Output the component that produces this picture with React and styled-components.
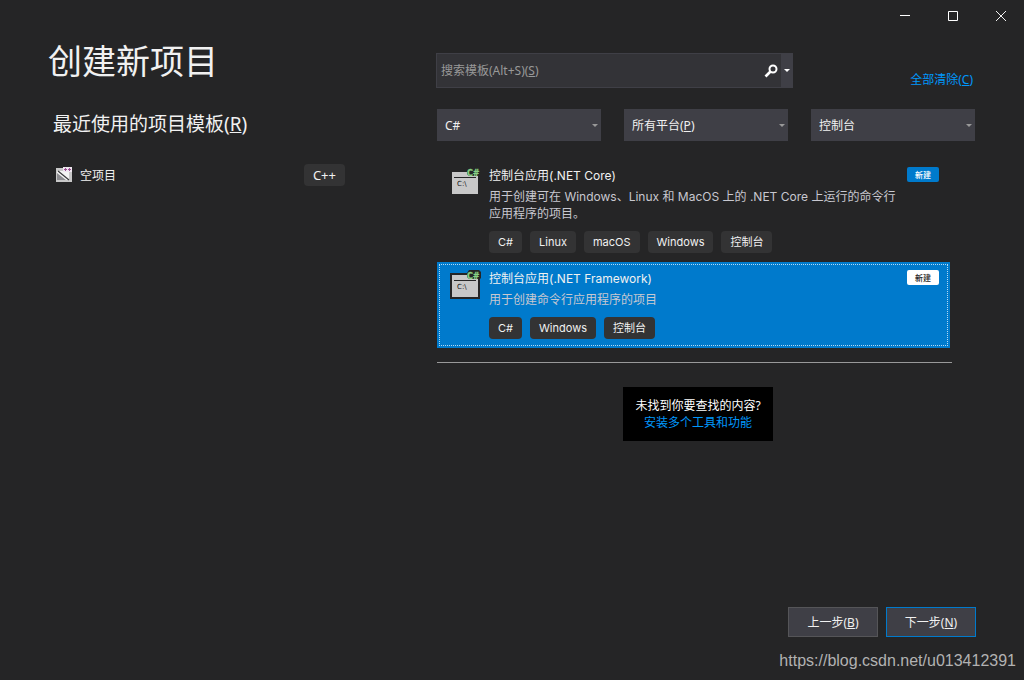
import React, { useState } from "react";
import styled, { createGlobalStyle, css } from "styled-components";

const GlobalStyle = createGlobalStyle`
  *, *::before, *::after { box-sizing: border-box; }
  body {
    margin: 0;
    background: #252526;
    color: #f1f1f1;
    font: 12px/17px "Noto Sans", "Noto Sans CJK SC", sans-serif;
  }
  button, input, select { font: inherit; color: inherit; }
  h1, h2, h3, p, ul { margin: 0; padding: 0; font-weight: 400; }
  ul { list-style: none; }
`;

const Window = styled.div`
  min-height: 100vh;
  display: flex;
  flex-direction: column;
  background: #252526;
`;

const TitleBar = styled.header`
  display: flex;
  justify-content: flex-end;
  gap: 2px;
`;

const CaptionButton = styled.button`
  width: 46px;
  height: 32px;
  padding: 0;
  border: 0;
  background: transparent;
  display: grid;
  place-items: center;
`;

const Body = styled.main`
  display: grid;
  grid-template-columns: 297px minmax(0, 1fr);
  column-gap: 92px;
  padding: 8px 49px 0 48px;
`;

const Title = styled.h1`
  font-size: 34px;
  line-height: 42px;
`;

const Subtitle = styled.h2`
  margin: 28px 0 0 5px;
  font-size: 19px;
  line-height: 28px;
`;

const RecentItem = styled.li`
  display: flex;
  align-items: center;
  gap: 8px;
  margin-top: 26px;
  padding-left: 8px;
`;

const RecentName = styled.span`
  flex: 1;
`;

const SearchRow = styled.div`
  display: flex;
  align-items: flex-end;
  justify-content: space-between;
  margin: 13px 2px 0 -1px;
`;

const SearchBox = styled.div`
  position: relative;
  display: flex;
  width: 357px;
  height: 35px;
  border: 1px solid #3f3f46;
  background: #333337;
`;

const SearchInput = styled.input`
  flex: 1;
  min-width: 0;
  padding: 0 4px;
  border: 0;
  outline: 0;
  background: transparent;
`;

const hint = css`
  position: absolute;
  top: 0;
  bottom: 0;
  display: flex;
  align-items: center;
  pointer-events: none;
  white-space: nowrap;
`;

const SearchLabel = styled.label`
  ${hint}
  left: 4px;
  color: #999999;
`;

const SearchButton = styled.button`
  width: ${(p) => (p.$narrow ? "11px" : "20px")};
  padding: 0;
  border: 0;
  background: ${(p) => (p.$narrow ? "#3f3f46" : "transparent")};
  display: grid;
  place-items: center;
`;

const Link = styled.a`
  color: #0097fb;
  text-decoration: none;
`;

const Filters = styled.div`
  display: grid;
  grid-template-columns: repeat(3, minmax(0, 1fr));
  gap: 23px;
  margin-top: 21px;
`;

const FilterField = styled.div`
  position: relative;
  height: 32px;
  background: #3f3f46;

  svg {
    position: absolute;
    right: 3px;
    top: 15px;
    pointer-events: none;
  }
`;

const FilterSelect = styled.select`
  width: 100%;
  height: 100%;
  padding: 0 16px 0 8px;
  border: 0;
  appearance: none;
  background: transparent;

  option { background: #1b1b1c; }
`;

const FilterLabel = styled.label`
  ${hint}
  left: 8px;
`;

const Results = styled.section`
  display: flex;
  flex-direction: column;
  margin: 18px 16px 0 0;
`;

const Template = styled.li`
  display: flex;
  align-items: flex-start;
  margin-right: 9px;
  padding: 8px 11px 9px 10px;
  background: ${(p) => (p.$selected ? "#007acc" : "transparent")};
  outline: ${(p) => (p.$selected ? "1px dotted #b4daf4" : "none")};
  outline-offset: -3px;
`;

const TemplateText = styled.div`
  flex: 1;
  min-width: 0;
  margin-left: 6px;
  font-family: Inter, "Noto Sans CJK SC", sans-serif;
`;

const TemplateName = styled.h3`
  font-size: 12px;
  line-height: 17px;
`;

const Description = styled.p`
  margin-top: 4px;
  color: #c8c8d0;
`;

const Tags = styled.ul`
  display: flex;
  gap: 8px;
  margin-top: 9px;
`;

const Tag = styled.span`
  display: block;
  height: 22px;
  padding: 0 9px;
  border-radius: 4px;
  background: #333334;
  color: #f1f1f1;
  font-size: ${(p) => (p.$large ? "13px" : "11px")};
  line-height: 22px;
  white-space: nowrap;
`;

const Badge = styled.span`
  width: 32px;
  height: 15px;
  border-radius: 2px;
  background: ${(p) => (p.$inverse ? "#ffffff" : "#007acc")};
  color: ${(p) => (p.$inverse ? "#1e1e1e" : "#ffffff")};
  font-size: 8px;
  font-weight: 500;
  line-height: 15px;
  text-align: center;
`;

const Divider = styled.hr`
  width: calc(100% - 7px);
  height: 1px;
  margin: 14px 0 0;
  border: 0;
  background: #999999;
`;

const NotFound = styled.div`
  align-self: center;
  margin-top: 24px;
  padding: 10px 12px;
  background: #000000;
  color: #ffffff;
  text-align: center;
`;

const Footer = styled.footer`
  margin-top: auto;
  padding: 0 8px 7px;
`;

const Actions = styled.div`
  display: flex;
  justify-content: flex-end;
  gap: 8px;
  padding-right: 40px;
`;

const ActionButton = styled.button`
  width: 90px;
  height: 30px;
  padding: 0;
  border: 1px solid ${(p) => (p.$primary ? "#007acc" : "#555558")};
  background: #3f3f46;
`;

const Watermark = styled.p`
  margin-top: 12px;
  color: #b2b2b2;
  font: 16px/24px "Liberation Sans", Arial, sans-serif;
  text-align: right;
`;

const Arrow = ({ color = "#999999" }) => (
  <svg width="6" height="3" viewBox="0 0 6 3" aria-hidden="true">
    <path d="M0 0h6L3 3z" fill={color} />
  </svg>
);

const ConsoleIcon = ({ outlined }) => (
  <svg width="36" height="32" viewBox="0 0 36 32" aria-hidden="true">
    {outlined && (
      <path d="M3 3h17l2-3h10l2 2v6l-1 1v20H3z" fill="#252526" />
    )}
    <path d="M5 5h26v22H5z" fill="#c8c8c8" />
    <path d="M7 10.500h22" stroke="#252526" />
    <path d="M20 5l2-4h11v8H22l-2-2z" fill="#252526" />
    <text x="20" y="9" fill="#89d185" stroke="#89d185" strokeWidth=".3" fontFamily="DejaVu Sans, sans-serif" fontWeight="700" fontSize="8">C#</text>
    <text x="10" y="19" fill="#111111" fontFamily="DejaVu Sans, sans-serif" fontSize="7">C:\</text>
  </svg>
);

const EmptyProjectIcon = () => (
  <svg width="16" height="16" viewBox="0 0 16 16" aria-hidden="true">
    <path d="M0 1h16v14H0z" fill="#c8c8c8" />
    <path d="M1 4h12v9H1z" fill="#f4f4f4" />
    <path d="M1 6l9 7H1z" fill="#8c8c90" />
    <path d="M2 4l11 9" stroke="#38383a" strokeWidth="1.200" />
    <path d="M7 0h9v5H7z" fill="#efe6ef" />
    <path d="M8 2.500h3M9.500 1v3M12 2.500h3M13.500 1v3" stroke="#9b4f96" />
  </svg>
);

const TEMPLATES = [
  {
    name: "控制台应用(.NET Core)",
    description: "用于创建可在 Windows、Linux 和 MacOS 上的 .NET Core 上运行的命令行应用程序的项目。",
    tags: ["C#", "Linux", "macOS", "Windows", "控制台"],
  },
  {
    name: "控制台应用(.NET Framework)",
    description: "用于创建命令行应用程序的项目",
    tags: ["C#", "Windows", "控制台"],
  },
];

export default function App() {
  const [query, setQuery] = useState("");
  const [platform, setPlatform] = useState("");
  const [selected, setSelected] = useState(1);

  return (
    <>
      <GlobalStyle />
      <Window>
        <TitleBar>
          <CaptionButton aria-label="最小化">
            <svg width="10" height="10" viewBox="0 0 10 10"><path d="M0 4h10v1H0z" fill="#fff" /></svg>
          </CaptionButton>
          <CaptionButton aria-label="最大化">
            <svg width="10" height="10" viewBox="0 0 10 10"><path d="M.5.5h9v9h-9z" fill="none" stroke="#fff" /></svg>
          </CaptionButton>
          <CaptionButton aria-label="关闭">
            <svg width="10" height="10" viewBox="0 0 10 10"><path d="M0 0l10 10M10 0L0 10" stroke="#f1f1f1" /></svg>
          </CaptionButton>
        </TitleBar>

        <Body>
          <section>
            <Title>创建新项目</Title>
            <Subtitle>最近使用的项目模板(<u>R</u>)</Subtitle>
            <ul>
              <RecentItem>
                <EmptyProjectIcon />
                <RecentName>空项目</RecentName>
                <Tag $large>C++</Tag>
              </RecentItem>
            </ul>
          </section>

          <section>
            <SearchRow>
              <SearchBox>
                <SearchInput id="search" value={query} onChange={(e) => setQuery(e.target.value)} />
                {!query && <SearchLabel htmlFor="search">搜索模板(Alt+S)(<u>S</u>)</SearchLabel>}
                <SearchButton aria-label="搜索">
                  <svg width="14" height="14" viewBox="0 0 14 14">
                    <circle cx="9" cy="5" r="3.500" fill="none" stroke="#fff" strokeWidth="2" />
                    <path d="M6.500 7.500l-5 5" stroke="#fff" strokeWidth="2.600" />
                  </svg>
                </SearchButton>
                <SearchButton $narrow aria-label="搜索选项"><Arrow color="#ffffff" /></SearchButton>
              </SearchBox>
              <Link href="#clear">全部清除(<u>C</u>)</Link>
            </SearchRow>

            <Filters>
              <FilterField>
                <FilterSelect aria-label="语言" defaultValue="cs">
                  <option value="cs">C#</option>
                </FilterSelect>
                <Arrow />
              </FilterField>
              <FilterField>
                <FilterSelect id="platform" value={platform} onChange={(e) => setPlatform(e.target.value)}>
                  <option value=""></option>
                  <option value="windows">Windows</option>
                </FilterSelect>
                {!platform && <FilterLabel htmlFor="platform">所有平台(<u>P</u>)</FilterLabel>}
                <Arrow />
              </FilterField>
              <FilterField>
                <FilterSelect aria-label="项目类型" defaultValue="console">
                  <option value="console">控制台</option>
                </FilterSelect>
                <Arrow />
              </FilterField>
            </Filters>

            <Results>
              <ul>
                {TEMPLATES.map((t, i) => (
                  <Template key={t.name} $selected={i === selected} onClick={() => setSelected(i)}>
                    <ConsoleIcon outlined={i === selected} />
                    <TemplateText>
                      <TemplateName>{t.name}</TemplateName>
                      <Description>{t.description}</Description>
                      <Tags>
                        {t.tags.map((tag) => <li key={tag}><Tag>{tag}</Tag></li>)}
                      </Tags>
                    </TemplateText>
                    <Badge $inverse={i === selected}>新建</Badge>
                  </Template>
                ))}
              </ul>
              <Divider />
              <NotFound>
                <p>未找到你要查找的内容?</p>
                <Link href="#install">安装多个工具和功能</Link>
              </NotFound>
            </Results>
          </section>
        </Body>

        <Footer>
          <Actions>
            <ActionButton>上一步(<u>B</u>)</ActionButton>
            <ActionButton $primary>下一步(<u>N</u>)</ActionButton>
          </Actions>
          <Watermark>https://blog.csdn.net/u013412391</Watermark>
        </Footer>
      </Window>
    </>
  );
}
